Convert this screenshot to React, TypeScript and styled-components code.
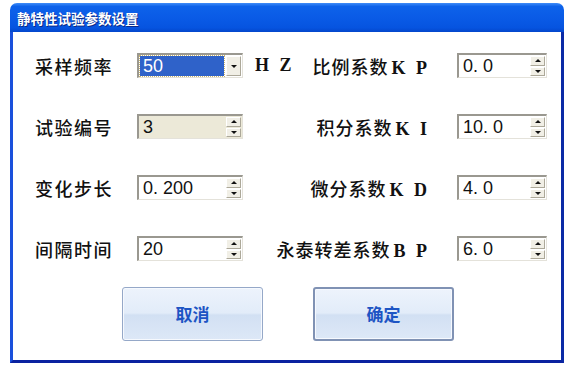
import styled, { createGlobalStyle } from 'styled-components';

const GlobalStyle = createGlobalStyle`
	body {
		margin: 0;
		background: #ffffff;
	}
`;

const Window = styled.div`
	margin: 3px 0 0 10px;
	width: 554px;
	height: 360px;
	display: flex;
	flex-direction: column;
`;

const TitleBar = styled.div`
	height: 29px;
	flex-shrink: 0;
	border-radius: 7px 7px 0 0;
	background: linear-gradient(
		#3f8cf8 0%,
		#0d62ea 12%,
		#0a5be6 50%,
		#0654e0 85%,
		#0447cc 100%
	);
	display: flex;
	align-items: center;
	padding-left: 7px;
	color: #ffffff;
	font-family: 'Noto Sans CJK SC', sans-serif;
	font-weight: 700;
	font-size: 13.5px;
	text-shadow: 1px 1px 0 #0c2a86;
`;

const Body = styled.div`
	flex: 1;
	background: #ffffff;
	border-left: 3px solid #1a50dc;
	border-right: 3px solid #0a2aa6;
	border-bottom: 3px solid #0a22a0;
	padding: 21px 0 0 22px;
	display: flex;
	flex-direction: column;
`;

const FieldGrid = styled.div`
	display: grid;
	grid-template-columns: 102px 106px 214px 90px;
	grid-auto-rows: 25px;
	row-gap: 36px;
	align-items: center;
`;

const Label = styled.span`
	font-family: 'Liberation Serif', 'Noto Sans CJK SC', serif;
	font-size: 18px;
	font-weight: 500;
	letter-spacing: 1.5px;
	color: #111111;
	white-space: nowrap;
`;

const MidCell = styled.div`
	display: flex;
	align-items: center;
	padding-right: 27px;
`;

const Latin = styled.span`
	font-weight: 700;
	letter-spacing: 3px;
	margin-left: 3px;
`;

const Unit = styled(Latin)`
	font-family: 'Liberation Serif', serif;
	font-size: 18px;
	color: #111111;
	margin-left: 12px;
`;

const RightLabel = styled(Label)`
	margin-left: auto;
	letter-spacing: 1px;
`;

const Field = styled.div<{ $readOnly?: boolean }>`
	height: 25px;
	box-sizing: border-box;
	display: flex;
	align-items: stretch;
	border-top: 2px solid #9a9890;
	border-left: 2px solid #9a9890;
	border-bottom: 1px solid #e4e2da;
	border-right: 1px solid #e4e2da;
	background: ${({ $readOnly }) => ($readOnly ? '#ece9d8' : '#ffffff')};
`;

const Value = styled.div<{ $selected?: boolean }>`
	flex: 1;
	display: flex;
	align-items: center;
	padding-left: 3px;
	margin: 1px 2px 1px 1px;
	font-family: 'Liberation Sans', sans-serif;
	font-size: 18px;
	color: ${({ $selected }) => ($selected ? '#ffffff' : '#111111')};
	background: ${({ $selected }) => ($selected ? '#2f62c9' : 'transparent')};
	outline: ${({ $selected }) => ($selected ? '1px dotted #c9b470' : 'none')};
	white-space: pre;
`;

const Spinner = styled.div`
	width: 15px;
	display: flex;
	flex-direction: column;
	gap: 1px;
	padding: 1px 1px 1px 0;
`;

const ArrowButton = styled.div<{ $dir: 'up' | 'down' }>`
	flex: 1;
	background: #f1efe6;
	border: 1px solid;
	border-color: #ffffff #aca899 #aca899 #ffffff;
	display: flex;
	align-items: center;
	justify-content: center;
	&::after {
		content: '';
		border-left: 3px solid transparent;
		border-right: 3px solid transparent;
		${({ $dir }) =>
			$dir === 'up'
				? 'border-bottom: 3px solid #111;'
				: 'border-top: 3px solid #111;'}
	}
`;

const ButtonRow = styled.div`
	display: flex;
	gap: 50px;
	margin: 26px 0 0 87px;
`;

const PushButton = styled.button<{ $default?: boolean }>`
	width: 141px;
	height: 54px;
	border-radius: 3px;
	border: ${({ $default }) =>
		$default ? '2px solid #8092b4' : '1px solid #95a8c8'};
	background: linear-gradient(
		#edf3fc 0%,
		#e2ecf9 48%,
		#d2e0f3 52%,
		#dde8f7 100%
	);
	box-shadow: inset 0 0 0 1px #f6f9fe;
	color: #1d55c4;
	font-family: 'Noto Sans CJK SC', sans-serif;
	font-size: 17px;
	font-weight: 700;
	padding: 0 0 2px;
`;

function SpinField({ value, readOnly }: { value: string; readOnly?: boolean }) {
	return (
		<Field $readOnly={readOnly}>
			<Value>{value}</Value>
			<Spinner>
				<ArrowButton $dir='up' />
				<ArrowButton $dir='down' />
			</Spinner>
		</Field>
	);
}

function ComboField({ value }: { value: string }) {
	return (
		<Field>
			<Value $selected>{value}</Value>
			<Spinner>
				<ArrowButton $dir='down' />
			</Spinner>
		</Field>
	);
}

export default function App() {
	return (
		<>
			<GlobalStyle />
			<Window>
				<TitleBar>静特性试验参数设置</TitleBar>
				<Body>
					<FieldGrid>
						<Label>采样频率</Label>
						<ComboField value='50' />
						<MidCell>
							<Unit>H Z</Unit>
							<RightLabel>
								比例系数<Latin>K P</Latin>
							</RightLabel>
						</MidCell>
						<SpinField value='0. 0' />

						<Label>试验编号</Label>
						<SpinField value='3' readOnly />
						<MidCell>
							<RightLabel>
								积分系数<Latin>K I</Latin>
							</RightLabel>
						</MidCell>
						<SpinField value='10. 0' />

						<Label>变化步长</Label>
						<SpinField value='0. 200' />
						<MidCell>
							<RightLabel>
								微分系数<Latin>K D</Latin>
							</RightLabel>
						</MidCell>
						<SpinField value='4. 0' />

						<Label>间隔时间</Label>
						<SpinField value='20' />
						<MidCell>
							<RightLabel>
								永泰转差系数<Latin>B P</Latin>
							</RightLabel>
						</MidCell>
						<SpinField value='6. 0' />
					</FieldGrid>
					<ButtonRow>
						<PushButton>取消</PushButton>
						<PushButton $default>确定</PushButton>
					</ButtonRow>
				</Body>
			</Window>
		</>
	);
}
